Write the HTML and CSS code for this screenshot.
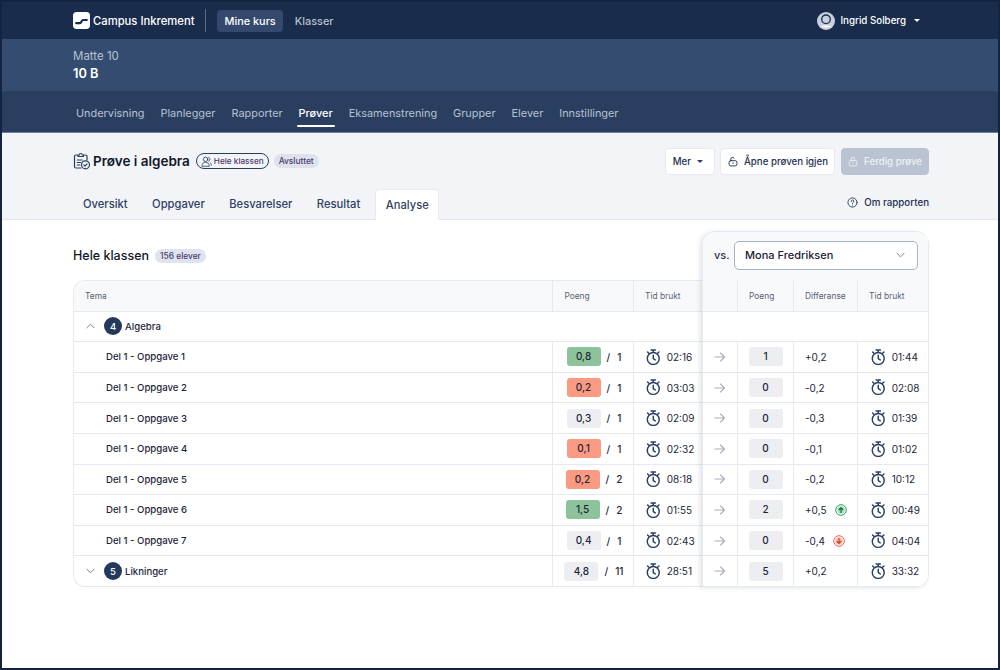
FILE: index.html
```html
<!DOCTYPE html>
<html lang="en">
<head>
  <meta charset="UTF-8">
  <meta name="viewport" content="width=device-width, initial-scale=1.0">
  <title>Prøve i algebra</title>
  <link rel="stylesheet" href="styles.css">
</head>
<body>

<svg class="defs" width="0" height="0">
  <symbol id="clock" viewBox="0 0 16 18">
    <g fill="none" stroke="currentColor" stroke-width="1.600" stroke-linecap="round" stroke-linejoin="round">
      <circle cx="8" cy="10.400" r="6.600"/>
      <path d="M5.600 1h4.800M8 1v2.600M8 7v3.600l2.200 1.500M1.700 3.200l1.500 1.500M14.300 3.200l-1.500 1.500"/>
    </g>
  </symbol>
  <symbol id="arrow" viewBox="0 0 12 12">
    <path d="M1 6h9.500M6.500 2l4 4-4 4" fill="none" stroke="currentColor" stroke-width="1.100" stroke-linecap="round" stroke-linejoin="round"/>
  </symbol>
  <symbol id="lock" viewBox="0 0 12 12">
    <g fill="none" stroke="currentColor" stroke-width="1.100" stroke-linecap="round" stroke-linejoin="round">
      <rect x="1.300" y="5" width="9.400" height="6.300" rx="2"/>
      <path d="M3.800 5V3.200a2.200 2.200 0 0 1 4.400 0V5M6 7.600v1"/>
    </g>
  </symbol>
  <symbol id="unlock" viewBox="0 0 12 12">
    <g fill="none" stroke="currentColor" stroke-width="1.100" stroke-linecap="round" stroke-linejoin="round">
      <rect x="1.300" y="5" width="9.400" height="6.300" rx="2"/>
      <path d="M3.400 5V3a2.100 2.100 0 0 1 4-.9M6 7.600v1"/>
    </g>
  </symbol>
</svg>

<div class="topbar">
  <div class="brand">
    <svg class="brand-logo" viewBox="0 0 16 16"><rect width="16" height="16" rx="3.500" fill="#fff"/><path d="M3 10.500h3.500c1.500 0 1.500-3 3-3H13" fill="none" stroke="#1a2c4c" stroke-width="2" stroke-linecap="round"/></svg>
    <span>Campus Inkrement</span>
  </div>
  <div class="divider"></div>
  <a class="top-link active">Mine kurs</a>
  <a class="top-link">Klasser</a>
  <div class="user">
    <svg class="avatar" viewBox="0 0 18 18">
      <circle cx="9" cy="9" r="9" fill="#c9d0dc"/>
      <circle cx="9" cy="7.300" r="4.300" fill="#c9d0dc" stroke="#1a2c4c" stroke-width="1.300"/>
      <path d="M4 14c1.200-.8 8.800-.8 10 0-1 2-9 2-10 0z" fill="#fff"/>
    </svg>
    <span>Ingrid Solberg</span>
    <i class="caret"></i>
  </div>
</div>

<div class="course">
  <div class="course-name">Matte 10</div>
  <div class="class-name">10 B</div>
</div>

<div class="mainnav">
  <a>Undervisning</a>
  <a>Planlegger</a>
  <a>Rapporter</a>
  <a class="active">Prøver</a>
  <a>Eksamenstrening</a>
  <a>Grupper</a>
  <a>Elever</a>
  <a>Innstillinger</a>
</div>

<div class="pagehead">
  <div class="title-row">
    <svg class="title-icon" viewBox="0 0 18 18">
      <g fill="none" stroke="#2a3f60" stroke-width="1.200" stroke-linecap="round" stroke-linejoin="round">
        <path d="M8 16H3a1.500 1.500 0 0 1-1.500-1.500V4.500A1.500 1.500 0 0 1 3 3h1.500M11 3h1.500A1.500 1.500 0 0 1 14 4.500V8"/>
        <path d="M5 4.500V3h1.300a1.500 1.500 0 0 1 3 0h1.200v1.500z"/>
        <path d="M4.300 8h5M4.300 10.500h3.500M4.300 13h2.500"/>
        <circle cx="12.500" cy="12.800" r="4"/>
        <path d="M10.800 12.900l1.200 1.200 2.100-2.200"/>
      </g>
    </svg>
    <h1>Prøve i algebra</h1>
    <span class="pill-outline">
      <svg viewBox="0 0 12 12"><g fill="none" stroke="#2a3f60" stroke-width=".9" stroke-linecap="round"><circle cx="5" cy="3.600" r="2.400"/><path d="M1 10.800c0-2.600 1.800-4 4-4s4 1.400 4 4zM8.300 1.500a2.300 2.300 0 0 1 0 4.300M10 7.500c.8.500 1.300 1.400 1.300 2.600"/></g></svg>
      Hele klassen
    </span>
    <span class="badge">Avsluttet</span>
    <div class="actions">
      <button class="btn more">Mer <i class="caret dark"></i></button>
      <button class="btn reopen"><svg class="btn-icon"><use href="#unlock"/></svg>Åpne prøven igjen</button>
      <button class="btn disabled"><svg class="btn-icon"><use href="#lock"/></svg>Ferdig prøve</button>
    </div>
  </div>
  <div class="tabs">
    <a>Oversikt</a>
    <a>Oppgaver</a>
    <a>Besvarelser</a>
    <a>Resultat</a>
    <a class="active">Analyse</a>
    <span class="about">
      <svg viewBox="0 0 12 12"><g fill="none" stroke="#2a3f60" stroke-width="1" stroke-linecap="round"><circle cx="6" cy="6" r="5"/><path d="M4.600 4.700a1.400 1.400 0 1 1 2 1.300c-.4.200-.6.500-.6.900M6 8.800v.1"/></g></svg>
      Om rapporten
    </span>
  </div>
</div>

<div class="content">
  <div class="left">
    <div class="left-head">
      <h2>Hele klassen</h2>
      <span class="badge light">156 elever</span>
    </div>
    <div class="table main-table">
      <div class="row head"><div class="cell">Tema</div><div class="cell">Poeng</div><div class="cell">Tid brukt</div></div>
      <div class="row">
        <div class="cell topic"><svg class="chev" viewBox="0 0 10 6"><path d="M1 5l4-4 4 4"/></svg><b class="num">4</b>Algebra</div>
        <div class="cell"></div><div class="cell"></div>
      </div>
      <div class="row">
        <div class="cell sub">Del 1 - Oppgave 1</div>
        <div class="cell score"><b class="box green">0,8</b><em>/</em>1</div>
        <div class="cell time"><svg class="clock"><use href="#clock"/></svg>02:16</div>
      </div>
      <div class="row">
        <div class="cell sub">Del 1 - Oppgave 2</div>
        <div class="cell score"><b class="box red">0,2</b><em>/</em>1</div>
        <div class="cell time"><svg class="clock"><use href="#clock"/></svg>03:03</div>
      </div>
      <div class="row">
        <div class="cell sub">Del 1 - Oppgave 3</div>
        <div class="cell score"><b class="box">0,3</b><em>/</em>1</div>
        <div class="cell time"><svg class="clock"><use href="#clock"/></svg>02:09</div>
      </div>
      <div class="row">
        <div class="cell sub">Del 1 - Oppgave 4</div>
        <div class="cell score"><b class="box red">0,1</b><em>/</em>1</div>
        <div class="cell time"><svg class="clock"><use href="#clock"/></svg>02:32</div>
      </div>
      <div class="row">
        <div class="cell sub">Del 1 - Oppgave 5</div>
        <div class="cell score"><b class="box red">0,2</b><em>/</em>2</div>
        <div class="cell time"><svg class="clock"><use href="#clock"/></svg>08:18</div>
      </div>
      <div class="row">
        <div class="cell sub">Del 1 - Oppgave 6</div>
        <div class="cell score"><b class="box green">1,5</b><em>/</em>2</div>
        <div class="cell time"><svg class="clock"><use href="#clock"/></svg>01:55</div>
      </div>
      <div class="row">
        <div class="cell sub">Del 1 - Oppgave 7</div>
        <div class="cell score"><b class="box">0,4</b><em>/</em>1</div>
        <div class="cell time"><svg class="clock"><use href="#clock"/></svg>02:43</div>
      </div>
      <div class="row">
        <div class="cell topic"><svg class="chev" viewBox="0 0 10 6"><path d="M1 1l4 4 4-4"/></svg><b class="num">5</b>Likninger</div>
        <div class="cell score"><b class="box">4,8</b><em>/</em>11</div>
        <div class="cell time"><svg class="clock"><use href="#clock"/></svg>28:51</div>
      </div>
    </div>
  </div>

  <div class="panel">
    <div class="panel-head">
      <span class="vs">vs.</span>
      <div class="select">Mona Fredriksen<svg viewBox="0 0 10 6"><path d="M1 1l4 4 4-4"/></svg></div>
    </div>
    <div class="table side-table">
      <div class="row head"><div class="cell"></div><div class="cell">Poeng</div><div class="cell">Differanse</div><div class="cell">Tid brukt</div></div>
      <div class="row"><div class="cell"></div><div class="cell"></div><div class="cell"></div><div class="cell"></div></div>
      <div class="row">
        <div class="cell arrow"><svg><use href="#arrow"/></svg></div>
        <div class="cell center"><b class="box">1</b></div>
        <div class="cell">+0,2</div>
        <div class="cell time"><svg class="clock"><use href="#clock"/></svg>01:44</div>
      </div>
      <div class="row">
        <div class="cell arrow"><svg><use href="#arrow"/></svg></div>
        <div class="cell center"><b class="box">0</b></div>
        <div class="cell">-0,2</div>
        <div class="cell time"><svg class="clock"><use href="#clock"/></svg>02:08</div>
      </div>
      <div class="row">
        <div class="cell arrow"><svg><use href="#arrow"/></svg></div>
        <div class="cell center"><b class="box">0</b></div>
        <div class="cell">-0,3</div>
        <div class="cell time"><svg class="clock"><use href="#clock"/></svg>01:39</div>
      </div>
      <div class="row">
        <div class="cell arrow"><svg><use href="#arrow"/></svg></div>
        <div class="cell center"><b class="box">0</b></div>
        <div class="cell">-0,1</div>
        <div class="cell time"><svg class="clock"><use href="#clock"/></svg>01:02</div>
      </div>
      <div class="row">
        <div class="cell arrow"><svg><use href="#arrow"/></svg></div>
        <div class="cell center"><b class="box">0</b></div>
        <div class="cell">-0,2</div>
        <div class="cell time"><svg class="clock"><use href="#clock"/></svg>10:12</div>
      </div>
      <div class="row">
        <div class="cell arrow"><svg><use href="#arrow"/></svg></div>
        <div class="cell center"><b class="box">2</b></div>
        <div class="cell">+0,5
          <svg class="trend up" viewBox="0 0 12 12"><circle class="ring" cx="6" cy="6" r="5.300"/><circle class="disc" cx="6" cy="6" r="3.700"/><path class="mark" d="M6 8.500V3.800M4.200 5.500L6 3.700l1.800 1.800"/></svg>
        </div>
        <div class="cell time"><svg class="clock"><use href="#clock"/></svg>00:49</div>
      </div>
      <div class="row">
        <div class="cell arrow"><svg><use href="#arrow"/></svg></div>
        <div class="cell center"><b class="box">0</b></div>
        <div class="cell">-0,4
          <svg class="trend down" viewBox="0 0 12 12"><circle class="ring" cx="6" cy="6" r="5.300"/><circle class="disc" cx="6" cy="6" r="3.700"/><path class="mark" d="M6 3.500v4.700M4.200 6.500L6 8.300l1.800-1.800"/></svg>
        </div>
        <div class="cell time"><svg class="clock"><use href="#clock"/></svg>04:04</div>
      </div>
      <div class="row">
        <div class="cell arrow"><svg><use href="#arrow"/></svg></div>
        <div class="cell center"><b class="box">5</b></div>
        <div class="cell">+0,2</div>
        <div class="cell time"><svg class="clock"><use href="#clock"/></svg>33:32</div>
      </div>
    </div>
  </div>
</div>

</body>
</html>
```

FILE: styles.css
```css
* {
  box-sizing: border-box;
}
body {
  margin: 0;
  height: 670px;
  overflow: hidden;
  border: 2px solid #14233f;
  background: #fff;
  font-family: Inter, "Liberation Sans", sans-serif;
  font-size: 10.5px;
  color: #1a2233;
}
.defs {
  position: absolute;
}
a {
  display: block;
}

/* top bar */
.topbar {
  display: flex;
  align-items: center;
  height: 37px;
  padding: 0 78px 0 71px;
  background: #1a2c4c;
  color: #fff;
}
.brand {
  display: flex;
  align-items: center;
  gap: 3px;
  font-size: 11.250px;
  font-weight: 500;
}
.brand-logo {
  width: 17px;
  height: 17px;
}
.divider {
  width: 1px;
  height: 23px;
  margin: 0 11px;
  background: #5a6c88;
}
.top-link {
  padding: 4px 7px;
  margin-right: 5px;
  border-radius: 4px;
  font-size: 10.900px;
  font-weight: 500;
  color: #b6c1d2;
}
.top-link.active {
  background: #34496d;
  color: #fff;
}
.user {
  display: flex;
  align-items: center;
  margin-left: auto;
  gap: 5px;
  font-size: 9.750px;
  font-weight: 500;
}
.avatar {
  width: 18px;
  height: 18px;
}
.caret {
  width: 0;
  height: 0;
  margin-left: 3px;
  border: 3px solid transparent;
  border-top: 3.500px solid #fff;
  border-bottom: 0;
}
.caret.dark {
  border-top-color: #2a3f60;
  margin-left: 6px;
}

/* course band */
.course {
  height: 52px;
  padding: 10px 71px 0;
  background: #344c70;
}
.course-name {
  font-size: 11.500px;
  color: #b6c1d2;
  line-height: 15px;
}
.class-name {
  margin-top: 2px;
  font-size: 12.800px;
  font-weight: 600;
  color: #fff;
  line-height: 15px;
}

/* section nav */
.mainnav {
  display: flex;
  gap: 16px;
  height: 42px;
  padding: 0 71px 0 74px;
  background: #2a3f60;
  border-bottom: 1px solid #6d7f99;
  font-size: 10.900px;
  color: #b6c1d2;
}
.mainnav a {
  padding-top: 14.500px;
}
.mainnav .active {
  position: relative;
  color: #fff;
  font-weight: 500;
}
.mainnav .active::after {
  content: "";
  position: absolute;
  left: -2px;
  right: -2px;
  bottom: 5px;
  height: 2px;
  border-radius: 1px;
  background: #fff;
}

/* page head */
.pagehead {
  height: 87px;
  padding: 14px 69px 0 71px;
  background: #f2f4f8;
  border-bottom: 1px solid #e3e6ec;
}
.title-row {
  display: flex;
  align-items: center;
  height: 28px;
}
.title-icon {
  width: 18px;
  height: 18px;
  margin-right: 2px;
}
h1 {
  margin: 0 6px 0 0;
  font-size: 13.500px;
  font-weight: 600;
  color: #10182a;
}
.pill-outline {
  display: flex;
  align-items: center;
  gap: 2px;
  height: 16px;
  padding: 0 4px;
  border: 1px solid #2a3f60;
  border-radius: 8px;
  font-size: 8.200px;
  font-weight: 500;
  color: #4a3b6b;
}
.pill-outline svg {
  width: 11px;
  height: 11px;
}
.badge {
  display: inline-block;
  margin-left: 5px;
  padding: 0 5px;
  height: 14px;
  line-height: 14px;
  border-radius: 7px;
  background: #dde2ec;
  font-size: 8.400px;
  font-weight: 500;
  color: #4a3b6b;
}
.actions {
  display: flex;
  gap: 5px;
  margin-left: auto;
}
.btn {
  display: flex;
  align-items: center;
  height: 27px;
  padding: 0 7px;
  border: 1px solid #e6e9ef;
  border-radius: 4px;
  background: #fff;
  font-family: inherit;
  font-size: 9.700px;
  font-weight: 500;
  color: #1f3150;
}
.btn.more {
  padding: 0 11px 0 7px;
}
.btn.reopen {
  padding: 0 6px 0 7px;
}
.btn-icon {
  width: 10px;
  height: 11px;
  margin: 0 6px 0 0;
}
.btn.disabled {
  margin-left: 1px;
  background: #b9c3d1;
  border-color: #b9c3d1;
  color: #edf0f4;
  padding: 0 6px 0 6px;
}
.tabs {
  display: flex;
  align-items: flex-end;
  margin-top: 14px;
  height: 30px;
  font-size: 11.200px;
  font-weight: 500;
  color: #2f4263;
}
.tabs a {
  height: 30px;
  padding: 8px 10px 0;
  margin-right: 4.500px;
  line-height: 14px;
}
.tabs .active {
  height: 31px;
  margin-bottom: -1px;
  background: #fff;
  border: 1px solid #e8ebf0;
  border-bottom: 0;
  border-radius: 4px 4px 0 0;
  padding: 8px 9px 0 10px;
  margin-right: 0;
}
.about {
  display: flex;
  align-items: center;
  gap: 6px;
  margin-left: auto;
  height: 30px;
  padding-bottom: 4px;
  font-size: 9.750px;
  font-weight: 500;
  color: #1f3150;
}
.about svg {
  width: 11px;
  height: 11px;
}

/* analysis */
.content {
  display: flex;
  align-items: flex-end;
  margin: 11px 69px 0 71px;
}
.left {
  width: 629px;
}
.left-head {
  display: flex;
  align-items: center;
  height: 49px;
}
h2 {
  margin: 0 1px 0 0;
  font-size: 12.500px;
  font-weight: 500;
  color: #10182a;
}
.badge.light {
  background: #dfe3ee;
}
.panel {
  position: relative;
  width: 227px;
  border: 1px solid #e6e9ef;
  border-bottom: 0;
  border-right: 0;
  border-radius: 14px 14px 12px 0;
  box-shadow: -2px 1px 5px rgba(40, 55, 85, 0.14);
  overflow: hidden;
}
.panel-head {
  display: flex;
  align-items: center;
  height: 49px;
  padding: 0 9px 3px 11px;
  background: #f8f9fb;
  border-right: 1px solid #e6e9ef;
}
.vs {
  width: 20px;
  font-size: 11px;
  font-weight: 500;
  color: #2a3350;
}
.select {
  display: flex;
  align-items: center;
  justify-content: space-between;
  width: 184px;
  height: 29px;
  padding: 0 12px 0 10px;
  border: 1px solid #a9b2c2;
  border-radius: 5px;
  background: #fff;
  font-size: 11px;
  font-weight: 500;
}
.select svg {
  width: 9px;
  height: 6px;
}
.select path,
.chev path {
  fill: none;
  stroke: #6b7486;
  stroke-width: 1;
  stroke-linecap: round;
  stroke-linejoin: round;
}

.table {
  border: 1px solid #e6e9ef;
  overflow: hidden;
}
.main-table {
  border-right: 0;
  border-radius: 12px 0 0 12px;
}
.side-table {
  border-width: 0 1px 1px 0;
  border-radius: 0 0 12px 0;
}
.row {
  display: grid;
  height: 30.600px;
  border-bottom: 1px solid #e6e9ef;
}
.row:last-child {
  border-bottom: 0;
  height: 30px;
}
.main-table .row {
  grid-template-columns: 478.400px 80.600px 69px;
}
.side-table .row {
  grid-template-columns: 34px 56px 64px 71px;
}
.cell {
  display: flex;
  align-items: center;
  gap: 3px;
  padding-left: 11px;
  min-width: 0;
  white-space: nowrap;
  font-size: 10px;
  color: #1d2638;
  border-left: 1px solid #e6e9ef;
}
.head {
  background: #f8f9fb;
}
.head .cell {
  font-size: 8.400px;
  color: #596275;
}
.cell:first-child {
  border-left: 0;
}
.main-table .row:nth-child(2) .cell,
.side-table .row:nth-child(2) .cell {
  border-left: 0;
}
.sub {
  padding-left: 32px;
  font-size: 9.600px;
  font-weight: 500;
}
.topic {
  padding-left: 12px;
  font-size: 9.600px;
  font-weight: 500;
}
.chev {
  width: 9px;
  height: 6px;
  margin-right: 6px;
}
.num {
  display: flex;
  align-items: center;
  justify-content: center;
  width: 18px;
  height: 18px;
  border-radius: 50%;
  background: #24395b;
  color: #fff;
  font-size: 9.500px;
  font-weight: 500;
}
.score {
  justify-content: center;
  padding-left: 1.600px;
  font-weight: 500;
  gap: 0;
}
.score em {
  margin: 0 7px 0 6px;
  font-style: normal;
}
.box {
  display: inline-block;
  width: 34px;
  height: 19px;
  line-height: 19px;
  border-radius: 3px;
  background: #eceef2;
  text-align: center;
  font-size: 10px;
  font-weight: 500;
  color: #1d2638;
}
.box.green {
  background: #8dc39b;
}
.box.red {
  background: #fb9a82;
}
.center {
  justify-content: center;
  padding-left: 0;
}
.time {
  gap: 5.700px;
}
.side-table .time {
  gap: 6.700px;
}
.clock {
  width: 14.500px;
  height: 16.300px;
  margin-left: 1.500px;
  color: #2a3f60;
}
.arrow {
  justify-content: center;
  padding-left: 0;
  color: #a8aeba;
}
.arrow svg {
  width: 12px;
  height: 12px;
}
.trend {
  width: 12px;
  height: 12px;
  margin-left: 5px;
}
.ring {
  fill: none;
  stroke-width: 1;
}
.mark {
  fill: none;
  stroke-width: 1.200;
  stroke-linecap: round;
  stroke-linejoin: round;
}
.up .ring {
  stroke: #22a060;
}
.up .disc {
  fill: #a9dcbc;
}
.up .mark {
  stroke: #14713f;
}
.down .ring {
  stroke: #e2654a;
}
.down .disc {
  fill: #fbb9a7;
}
.down .mark {
  stroke: #c5432a;
}
```
